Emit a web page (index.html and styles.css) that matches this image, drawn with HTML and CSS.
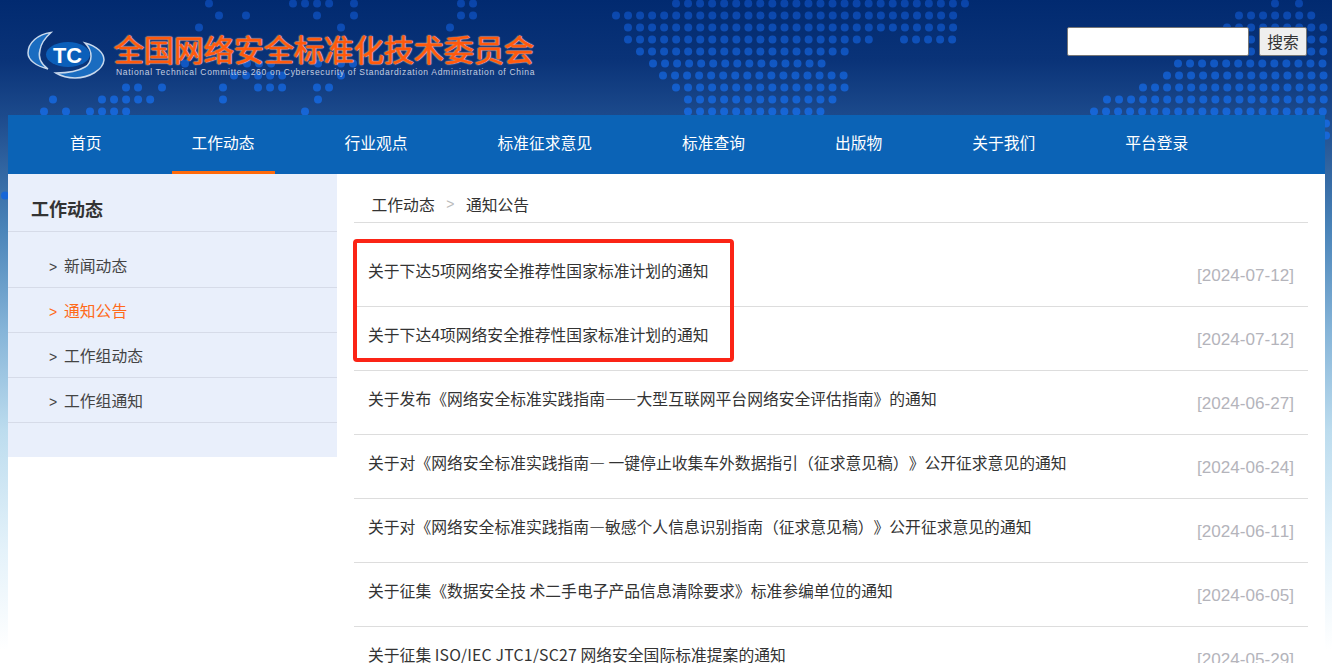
FILE: index.html
```html
<!DOCTYPE html>
<html lang="zh-CN">
<head>
<meta charset="utf-8">
<title>全国网络安全标准化技术委员会</title>
<link rel="stylesheet" href="styles.css">
</head>
<body>
<svg class="map" width="1332" height="200" viewBox="0 0 1332 200" aria-hidden="true">
  <defs>
    <linearGradient id="dotfade" gradientUnits="userSpaceOnUse" x1="0" y1="0" x2="0" y2="116">
      <stop offset="0" stop-color="#0a44a8"/>
      <stop offset="1" stop-color="#1767d8"/>
    </linearGradient>
  </defs>
  <g class="dotrows" stroke="url(#dotfade)">
    <path d="M209 3.5h1M293 3.5h37M354 3.5h1M461 3.5h13M676 3.5h300M1275 3.5h1M1299 3.5h1"/>
    <path d="M219 15.5h1M246 15.5h1M317 15.5h1M354 15.5h1M461 15.5h13M616 15.5h349M1239 15.5h73"/>
    <path d="M199 27.5h11M341 27.5h1M450 27.5h1M628 27.5h337M1227 27.5h105"/>
    <path d="M628 39.5h241M904 39.5h49M1227 39.5h105"/>
    <path d="M640 51.5h205M1239 51.5h93"/>
    <path d="M185 63.5h1M247 63.5h36M318 63.5h12M341 63.5h13M653 63.5h180M1178 63.5h154"/>
    <path d="M234 75.5h49M341 75.5h1M663 75.5h182M1167 75.5h165"/>
    <path d="M126 87.5h13M162 87.5h1M223 87.5h12M258 87.5h25M317 87.5h13M676 87.5h169M1143 87.5h189"/>
    <path d="M53 99.5h1M102 99.5h49M223 99.5h12M318 99.5h12M688 99.5h145M1107 99.5h225"/>
    <path d="M44 111.5h1M66 111.5h1M90 111.5h37M305 111.5h1M688 111.5h133M1094 111.5h238"/>
    <path d="M1326 123.5h1M1326 135.5h1M5 195.5h1"/>
  </g>
</svg>
<div class="page">
  <header class="top">
    <div class="brand">
      <svg class="logo" width="78" height="48" viewBox="0 0 78 48" aria-hidden="true">
        <path class="crescent" d="M24 1.5C11 3 1 12 1 22C1 29 9 35 21 38C14 33 11 26 13 19C14 12 19 6 24 1.5Z"/>
        <path class="crescent" d="M58 12C70 15 77 22 77 29C76 39 62 47 48 47C41 47 34 45 29 42C38 42 50 41 58 36C66 31 66 20 58 12Z"/>
        <ellipse class="orb" cx="41" cy="23.500" rx="22" ry="12.500"/>
        <text class="tc" x="40.500" y="32" textLength="29" lengthAdjust="spacingAndGlyphs">TC</text>
      </svg>
      <div class="brand-text">
        <div class="brand-cn">全国网络安全标准化技术委员会</div>
        <div class="brand-en">National Technical Committee 260 on Cybersecurity of Standardization Administration of China</div>
      </div>
    </div>
    <form class="search">
      <input class="search-input" type="text" aria-label="搜索">
      <button class="search-btn" type="button">搜索</button>
    </form>
  </header>
  <nav class="nav">
    <a class="nav-item">首页</a>
    <a class="nav-item active">工作动态</a>
    <a class="nav-item">行业观点</a>
    <a class="nav-item">标准征求意见</a>
    <a class="nav-item">标准查询</a>
    <a class="nav-item">出版物</a>
    <a class="nav-item">关于我们</a>
    <a class="nav-item">平台登录</a>
  </nav>
  <main class="body">
    <aside class="side">
      <h2 class="side-title">工作动态</h2>
      <ul class="side-list">
        <li class="side-item"><span class="gt">&gt;</span>新闻动态</li>
        <li class="side-item current"><span class="gt">&gt;</span>通知公告</li>
        <li class="side-item"><span class="gt">&gt;</span>工作组动态</li>
        <li class="side-item"><span class="gt">&gt;</span>工作组通知</li>
      </ul>
    </aside>
    <section class="content">
      <div class="crumb"><span>工作动态</span><span class="crumb-sep">&gt;</span><span>通知公告</span></div>
      <div class="list-wrap">
        <div class="mark"></div>
        <ul class="list">
          <li class="row"><span class="row-title">关于下达5项网络安全推荐性国家标准计划的通知</span><span class="row-date">[2024-07-12]</span></li>
          <li class="row"><span class="row-title">关于下达4项网络安全推荐性国家标准计划的通知</span><span class="row-date">[2024-07-12]</span></li>
          <li class="row"><span class="row-title">关于发布《网络安全标准实践指南——大型互联网平台网络安全评估指南》的通知</span><span class="row-date">[2024-06-27]</span></li>
          <li class="row"><span class="row-title">关于对《网络安全标准实践指南— 一键停止收集车外数据指引（征求意见稿）》公开征求意见的通知</span><span class="row-date">[2024-06-24]</span></li>
          <li class="row"><span class="row-title">关于对《网络安全标准实践指南—敏感个人信息识别指南（征求意见稿）》公开征求意见的通知</span><span class="row-date">[2024-06-11]</span></li>
          <li class="row"><span class="row-title">关于征集《数据安全技 术二手电子产品信息清除要求》标准参编单位的通知</span><span class="row-date">[2024-06-05]</span></li>
          <li class="row"><span class="row-title">关于征集 <span class="latin">ISO/IEC JTC1/SC27</span> 网络安全国际标准提案的通知</span><span class="row-date">[2024-05-29]</span></li>
        </ul>
      </div>
    </section>
  </main>
</div>
</body>
</html>
```
FILE: styles.css
```css
* { box-sizing: border-box; }
html { overflow: hidden; }
body {
  margin: 0;
  height: 663px;
  overflow: hidden;
  position: relative;
  font-family: "Noto Sans CJK SC", "Liberation Sans", sans-serif;
  text-spacing-trim: space-all;
  color: #333;
  background: linear-gradient(180deg, #012a70 0, #0a3378 60px, #1c4a8c 115px, #4a84b9 230px, #85b4d8 330px, #bcdcee 430px, #e4f2fa 550px, #fff 650px);
}
ul { list-style: none; margin: 0; padding: 0; }

.map { position: absolute; left: 0; top: 0; }
.dotrows path {
  fill: none;
  stroke-width: 8;
  stroke-linecap: round;
  stroke-dasharray: 0 12.040;
}

.page { position: relative; margin-left: 8px; width: 1317px; }

.top { height: 115px; display: flex; justify-content: space-between; align-items: flex-start; }
.brand { display: flex; margin: 31px 0 0 19px; }
.logo { display: block; flex: none; }
.crescent { fill: #1a6cc0; stroke: #c8d8ec; stroke-width: 1.500; }
.orb { fill: #0b5fba; }
.tc { fill: #fff; font: bold 22px "Liberation Sans", sans-serif; text-anchor: middle; }
.brand-text { margin: 1px 0 0 9px; }
.brand-cn {
  font-size: 30px;
  line-height: 32px;
  font-weight: 400;
  color: #ff5a0c;
  -webkit-text-stroke: .7px #ff5a0c;
  white-space: nowrap;
  text-shadow: 0 0 1.500px #e9d9cf, 0 0 2px #c9b9b9, 1px 0 1px rgba(235, 215, 205, .55), -1px 0 1px rgba(235, 215, 205, .55);
}
.brand-en {
  margin: 3px 0 0 2px;
  font: 8.500px/10px "Liberation Sans", sans-serif;
  letter-spacing: .69px;
  color: #c3cde0;
  white-space: nowrap;
}

.search { display: flex; margin: 27px 18px 0 0; gap: 10px; }
.search-input {
  width: 182px; height: 29px; padding: 0 4px;
  background: #fff; border: 1px solid #767676; border-radius: 2px;
}
.search-btn {
  width: 48px; height: 29px; padding: 0;
  background: #efefef; border: 1px solid #767676; border-radius: 2px;
  font: 15.800px/1 "Noto Sans CJK SC", sans-serif; color: #333;
}

.nav { height: 59px; padding-left: 42px; display: flex; gap: 50px; background: #0b63b6; }
.nav-item {
  padding: 0 20px;
  font-size: 15.750px;
  line-height: 56px;
  color: #fff;
  white-space: nowrap;
  border-bottom: 3px solid transparent;
}
.nav-item.active { border-bottom-color: #ff6a0a; }

.body { display: flex; background: #fff; height: 489px; }
.side { width: 329px; height: 283px; flex: none; background: #e9effb; }
.side-title {
  margin: 0;
  height: 58px;
  padding-left: 23px;
  font-size: 18px;
  line-height: 68px;
  font-weight: 700;
  color: #333;
  border-bottom: 1px solid #d6dbe8;
  overflow: hidden;
}
.side-list { padding-top: 11px; }
.side-item {
  height: 45px;
  padding-left: 41px;
  font-size: 15.800px;
  line-height: 46px;
  color: #444;
  border-bottom: 1px solid #d6dbe8;
}
.gt { display: inline-block; width: 15px; font: 14px "Liberation Sans", sans-serif; }
.side-item.current { color: #ff6a1a; }

.content { flex: 1; padding: 0 17px; min-width: 0; }
.crumb {
  height: 49px;
  padding-left: 17.500px;
  display: flex;
  font-size: 15.800px;
  line-height: 61px;
  color: #333;
  border-bottom: 1px solid #ddd;
}
.crumb-sep { margin: 0 11.500px; color: #bbb; font: 14px/61px "Liberation Sans", sans-serif; }

.list-wrap { position: relative; margin-top: 20px; }
.mark {
  position: absolute;
  left: -1px; top: -4px;
  width: 381px; height: 123px;
  border: 4.500px solid #fb2416;
  border-radius: 4px;
  z-index: 1;
}
.row {
  height: 64px;
  padding: 0 14px;
  display: flex;
  justify-content: space-between;
  border-bottom: 1px solid #ddd;
}
.row-title { font-size: 15.800px; line-height: 56px; color: #333; white-space: nowrap; }
.latin { letter-spacing: .2px; }
.row-date {
  font: 17.100px/66px "Liberation Sans", sans-serif;
  font-kerning: none;
  color: #b4b4bb;
  white-space: nowrap;
}
```
